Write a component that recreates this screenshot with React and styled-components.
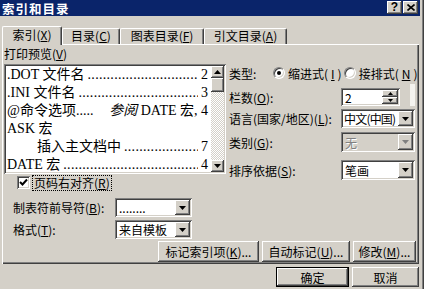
import React from "react";
import styled, { createGlobalStyle, css } from "styled-components";

const FACE = "#d4d0c8";
const SHADOW = "#808080";
const DARK = "#404040";
const NAVY = "#0a246a";

const GlobalStyle = createGlobalStyle`
  html, body { margin: 0; padding: 0; background: ${FACE}; }
  body {
    font-family: "Noto Sans CJK SC", "Liberation Sans", sans-serif;
    font-size: 12px;
    color: #000;
  }
`;

const raised = css`
  box-shadow: inset -1px -1px ${DARK}, inset 1px 1px #fff,
    inset -2px -2px ${SHADOW}, inset 2px 2px ${FACE};
`;

const sunken = css`
  box-shadow: inset 1px 1px ${SHADOW}, inset -1px -1px #fff,
    inset 2px 2px ${DARK}, inset -2px -2px ${FACE};
`;

const Window = styled.div`
  width: 424px;
  height: 289px;
  box-sizing: border-box;
  padding-right: 4px;
  background: ${FACE};
  box-shadow: inset -1px 0 ${DARK}, inset -2px 0 ${SHADOW};
  display: flex;
  flex-direction: column;
  overflow: hidden;
`;

const TitleBar = styled.div`
  height: 16px;
  background: ${NAVY};
  display: flex;
  align-items: flex-start;
  padding: 0 2px;
`;

const Title = styled.div`
  flex: 1;
  padding-top: 1px;
  color: #fff;
  font-weight: bold;
  font-size: 12.5px;
  line-height: 15px;
  letter-spacing: 1px;
`;

const CaptionButton = styled.div`
  width: 15px;
  height: 13px;
  margin: 1px 0 0 1px;
  background: ${FACE};
  ${raised};
  display: flex;
  align-items: center;
  justify-content: center;
  font: bold 12px "Liberation Sans", sans-serif;
  line-height: 13px;
`;

const Body = styled.div`
  padding: 10px 1px 0 2px;
  display: flex;
  flex-direction: column;
`;

const TabRow = styled.div`
  display: flex;
  align-items: flex-end;
  height: 18px;
  position: relative;
  z-index: 2;
`;

const Tab = styled.div`
  width: ${(p) => p.$w}px;
  height: ${(p) => (p.$active ? 19 : 16)}px;
  margin-bottom: ${(p) => (p.$active ? -1 : 0)}px;
  box-sizing: border-box;
  background: ${FACE};
  border-top: 1px solid #fff;
  border-left: 1px solid #fff;
  border-right: 1px solid ${DARK};
  border-radius: 2px 2px 0 0;
  box-shadow: inset -1px 0 ${SHADOW};
  text-align: center;
  line-height: ${(p) => (p.$active ? 15 : 14)}px;
  white-space: nowrap;
`;

const Panel = styled.div`
  height: 220px;
  box-sizing: border-box;
  padding: 2px 3px 0 2px;
  box-shadow: inset 1px 1px #fff, inset -1px -1px ${DARK},
    inset -2px -2px ${SHADOW};
  display: flex;
  flex-direction: column;
`;

const TopArea = styled.div`
  display: grid;
  grid-template-columns: 222px 1fr;
  column-gap: 3px;
`;

const LeftCol = styled.div`
  display: flex;
  flex-direction: column;
`;

const SectionLabel = styled.div`
  height: 18px;
  line-height: 16px;
`;

const PreviewBox = styled.div`
  height: 110px;
  box-sizing: border-box;
  padding: 2px;
  background: #fff;
  ${sunken};
  display: flex;
`;

const List = styled.div`
  flex: 1;
  min-width: 0;
  padding: 0 3px 0 1px;
  font-family: "Liberation Serif", "Noto Sans CJK SC", serif;
  font-size: 14px;
  overflow: hidden;
`;

const Entry = styled.div`
  display: flex;
  height: 18px;
  line-height: 18px;
  white-space: nowrap;
  padding-left: ${(p) => p.$indent || 0}px;
  justify-content: ${(p) => (p.$spread ? "space-between" : "flex-start")};
`;

const Leader = styled.span`
  flex: 1;
  overflow: hidden;
  margin: 0 3px;
  letter-spacing: 0.3px;
  &::before {
    content: "..............................................................................";
  }
`;

const ScrollBar = styled.div`
  width: 13px;
  display: flex;
  flex-direction: column;
  background: repeating-conic-gradient(#fff 0 25%, ${FACE} 0 50%) 0 0 / 2px
    2px;
`;

const ScrollButton = styled.div`
  height: 12px;
  background: ${FACE};
  ${raised};
  display: flex;
  align-items: center;
  justify-content: center;
`;

const Thumb = styled.div`
  height: 14px;
  background: ${FACE};
  ${raised};
`;

const Track = styled.div`
  flex: 1;
`;

const CheckRow = styled.label`
  margin-top: 1px;
  height: 15px;
  padding-left: 13px;
  display: flex;
  align-items: center;
  gap: 3px;
`;

const CheckBox = styled.span`
  width: 13px;
  height: 13px;
  box-sizing: border-box;
  background: #fff;
  ${sunken};
  display: flex;
  align-items: center;
  justify-content: center;
`;

const FocusText = styled.span`
  outline: 1px dotted #000;
  padding: 0 1px;
  line-height: 14px;
`;

const RightCol = styled.div`
  padding-top: 18px;
  display: flex;
  flex-direction: column;
`;

const FieldRow = styled.div`
  display: flex;
  align-items: center;
  height: ${(p) => p.$h || 19}px;
  margin-top: ${(p) => p.$mt || 0}px;
  padding-left: ${(p) => p.$pl || 0}px;
  white-space: nowrap;
`;

const FieldLabel = styled.span`
  width: ${(p) => p.$w}px;
  flex: none;
`;

const RadioOption = styled.span`
  display: inline-flex;
  align-items: center;
  gap: 3px;
  margin-right: ${(p) => p.$mr || 0}px;
`;

const Radio = styled.span`
  width: 12px;
  height: 12px;
  box-sizing: border-box;
  border-radius: 50%;
  background: #fff;
  border: 1px solid;
  border-color: ${SHADOW} #fff #fff ${SHADOW};
  box-shadow: inset 1px 1px ${DARK}, inset -1px -1px ${FACE};
  display: inline-flex;
  align-items: center;
  justify-content: center;
  &::after {
    content: "";
    width: 4px;
    height: 4px;
    border-radius: 50%;
    background: #000;
    display: ${(p) => (p.$checked ? "block" : "none")};
  }
`;

const Field = styled.div`
  width: ${(p) => p.$w}px;
  height: ${(p) => p.$h || 19}px;
  box-sizing: border-box;
  padding: 2px;
  background: ${(p) => (p.$disabled ? FACE : "#fff")};
  ${sunken};
  display: flex;
  flex: none;
`;

const FieldText = styled.div`
  flex: 1;
  min-width: 0;
  padding-left: ${(p) => (p.$tight ? 1 : 2)}px;
  letter-spacing: ${(p) => (p.$tight ? -0.8 : 0)}px;
  overflow: hidden;
  white-space: nowrap;
  display: flex;
  align-items: center;
  color: ${(p) => (p.$disabled ? SHADOW : "#000")};
  text-shadow: ${(p) => (p.$disabled ? "1px 1px #fff" : "none")};
`;

const DropButton = styled.div`
  width: 15px;
  flex: none;
  background: ${FACE};
  ${raised};
  display: flex;
  align-items: center;
  justify-content: center;
`;

const SpinButtons = styled.div`
  width: 16px;
  display: flex;
  flex-direction: column;
`;

const SpinButton = styled.div`
  flex: 1;
  background: ${FACE};
  ${raised};
  display: flex;
  align-items: center;
  justify-content: center;
`;

const GhostBar = styled.div`
  width: 5px;
  height: 22px;
  margin: -4px 0 0 10px;
  background: #f4f3ef;
`;

const ButtonRow = styled.div`
  display: flex;
  justify-content: flex-end;
  gap: 3px;
  margin-top: ${(p) => p.$mt || 0}px;
`;

const PushButton = styled.div`
  width: ${(p) => p.$w}px;
  height: ${(p) => p.$h || 21}px;
  box-sizing: border-box;
  background: ${FACE};
  ${(p) =>
    p.$default
      ? css`
          box-shadow: inset 0 0 0 1px #000, inset -2px -2px ${DARK},
            inset 2px 2px #fff, inset -3px -3px ${SHADOW};
        `
      : raised};
  display: flex;
  align-items: center;
  justify-content: center;
  white-space: nowrap;
`;

const Mn = styled.u`
  text-decoration: underline;
  text-underline-offset: 1px;
`;

const Arrow = ({ up, size = 7, color = "#000" }) => {
  const h = Math.ceil(size / 2);
  return (
    <svg width={size} height={h} viewBox={`0 0 ${size} ${h}`}>
      <polygon
        points={up ? `0,${h} ${size},${h} ${size / 2},0` : `0,0 ${size},0 ${size / 2},${h}`}
        fill={color}
      />
    </svg>
  );
};

const Combo = ({ w, h, text, disabled, tight }) => (
  <Field $w={w} $h={h} $disabled={disabled}>
    <FieldText $disabled={disabled} $tight={tight}>
      {text}
    </FieldText>
    <DropButton>
      <Arrow color={disabled ? SHADOW : "#000"} />
    </DropButton>
  </Field>
);

export default function App() {
  return (
    <>
      <GlobalStyle />
      <Window>
        <TitleBar>
          <Title>索引和目录</Title>
          <CaptionButton>?</CaptionButton>
          <CaptionButton>
            <svg width="8" height="7" viewBox="0 0 8 7">
              <path d="M0.5 0.5 L7.5 6.5 M7.5 0.5 L0.5 6.5" stroke="#000" strokeWidth="1.6" />
            </svg>
          </CaptionButton>
        </TitleBar>
        <Body>
          <TabRow>
            <Tab $w={60} $active>
              索引(<Mn>X</Mn>)
            </Tab>
            <Tab $w={58}>
              目录(<Mn>C</Mn>)
            </Tab>
            <Tab $w={84}>
              图表目录(<Mn>F</Mn>)
            </Tab>
            <Tab $w={83}>
              引文目录(<Mn>A</Mn>)
            </Tab>
          </TabRow>
          <Panel>
            <TopArea>
              <LeftCol>
                <SectionLabel>
                  打印预览(<Mn>V</Mn>)
                </SectionLabel>
                <PreviewBox>
                  <List>
                    <Entry>
                      .DOT 文件名<Leader />2
                    </Entry>
                    <Entry>
                      .INI 文件名<Leader />3
                    </Entry>
                    <Entry $spread>
                      <span>@命令选项.....</span>
                      <span>
                        <i>参阅</i> DATE 宏, 4
                      </span>
                    </Entry>
                    <Entry>ASK 宏</Entry>
                    <Entry $indent={30}>
                      插入主文档中<Leader />7
                    </Entry>
                    <Entry>
                      DATE 宏<Leader />4
                    </Entry>
                  </List>
                  <ScrollBar>
                    <ScrollButton>
                      <Arrow up size={7} />
                    </ScrollButton>
                    <Thumb />
                    <Track />
                    <ScrollButton>
                      <Arrow size={7} />
                    </ScrollButton>
                  </ScrollBar>
                </PreviewBox>
                <CheckRow>
                  <CheckBox>
                    <svg width="9" height="9" viewBox="0 0 9 9">
                      <path d="M1 4 L3.5 6.5 L8 1.5" stroke="#000" strokeWidth="2" fill="none" />
                    </svg>
                  </CheckBox>
                  <FocusText>
                    页码右对齐(<Mn>R</Mn>)
                  </FocusText>
                </CheckRow>
              </LeftCol>
              <RightCol>
                <FieldRow $h={18}>
                  <FieldLabel $w={44}>类型:</FieldLabel>
                  <RadioOption $mr={2}>
                    <Radio $checked />
                    缩进式(<Mn>I</Mn>)
                  </RadioOption>
                  <RadioOption>
                    <Radio />
                    接排式(<Mn>N</Mn>)
                  </RadioOption>
                </FieldRow>
                <FieldRow $h={18} $mt={6}>
                  <FieldLabel $w={112}>
                    栏数(<Mn>O</Mn>):
                  </FieldLabel>
                  <Field $w={59} $h={18}>
                    <FieldText>2</FieldText>
                    <SpinButtons>
                      <SpinButton>
                        <Arrow up size={5} />
                      </SpinButton>
                      <SpinButton>
                        <Arrow size={5} />
                      </SpinButton>
                    </SpinButtons>
                  </Field>
                  <GhostBar />
                </FieldRow>
                <FieldRow $mt={3}>
                  <FieldLabel $w={112}>
                    语言(国家/地区)(<Mn>L</Mn>):
                  </FieldLabel>
                  <Combo w={74} text="中文(中国)" tight />
                </FieldRow>
                <FieldRow $h={20} $mt={4}>
                  <FieldLabel $w={112}>
                    类别(<Mn>G</Mn>):
                  </FieldLabel>
                  <Combo w={74} h={20} text="无" disabled />
                </FieldRow>
                <FieldRow $h={20} $mt={8}>
                  <FieldLabel $w={112}>
                    排序依据(<Mn>S</Mn>):
                  </FieldLabel>
                  <Combo w={74} h={20} text="笔画" />
                </FieldRow>
              </RightCol>
            </TopArea>
            <FieldRow $mt={8} $pl={9}>
              <FieldLabel $w={102}>
                制表符前导符(<Mn>B</Mn>):
              </FieldLabel>
              <Combo w={77} text="........" />
            </FieldRow>
            <FieldRow $mt={3} $pl={9}>
              <FieldLabel $w={102}>
                格式(<Mn>T</Mn>):
              </FieldLabel>
              <Combo w={77} text="来自模板" />
            </FieldRow>
            <ButtonRow $mt={2}>
              <PushButton $w={101}>
                标记索引项(<Mn>K</Mn>)...
              </PushButton>
              <PushButton $w={88}>
                自动标记(<Mn>U</Mn>)...
              </PushButton>
              <PushButton $w={63}>
                修改(<Mn>M</Mn>)...
              </PushButton>
            </ButtonRow>
          </Panel>
          <ButtonRow $mt={3}>
            <PushButton $w={73} $h={20} $default>
              确定
            </PushButton>
            <PushButton $w={67} $h={20}>
              取消
            </PushButton>
          </ButtonRow>
        </Body>
      </Window>
    </>
  );
}
